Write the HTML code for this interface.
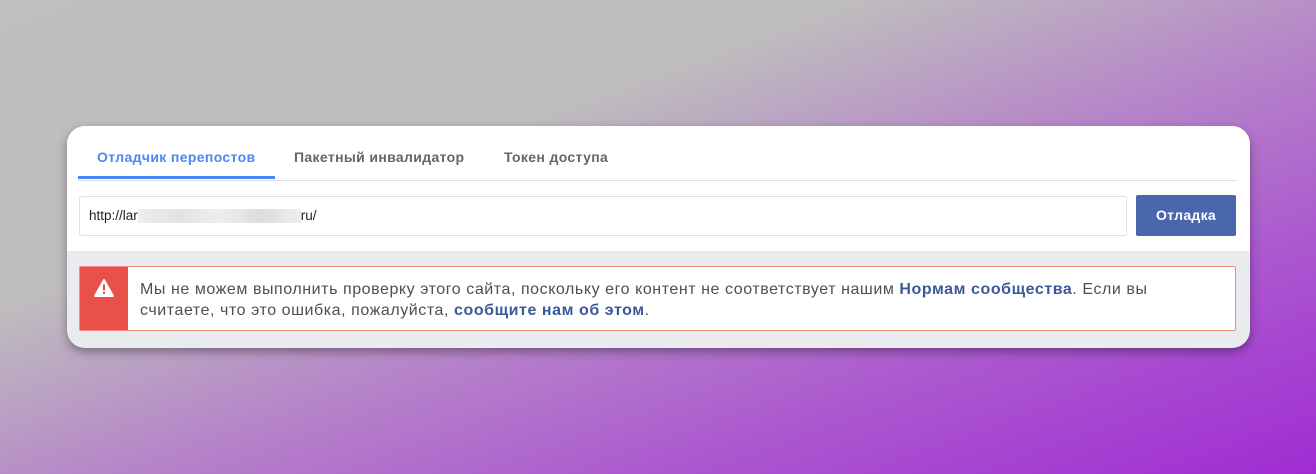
<!DOCTYPE html>
<html><head><meta charset="utf-8"><style>
*{box-sizing:border-box;margin:0;padding:0}
body{width:1316px;height:474px;overflow:hidden;font-family:"Liberation Sans","DejaVu Sans",sans-serif;
background:linear-gradient(to bottom right,#bfbfbf 0%,#bebcbe 33%,#b683c9 55%,#ab58cf 75%,#a02cd3 100%);position:relative}
.card{position:absolute;left:67px;top:126px;width:1183px;height:222px;border-radius:18px;background:#e9ebee;overflow:hidden;box-shadow:0 4px 10px rgba(0,0,0,.35)}
.top{position:absolute;left:0;top:0;width:100%;height:125px;background:#fff}
.tab{position:absolute;top:23px;font-size:14px;letter-spacing:0.35px;font-weight:bold;color:#606770}
.divider{position:absolute;left:11px;top:54px;width:1159px;height:1px;background:#dddfe2}
.ul{position:absolute;left:11px;top:50px;width:197px;height:3px;background:#4b86f5}
.input{position:absolute;left:12px;top:70px;width:1048px;height:40px;border:1px solid #dddfe2;border-radius:2px;font-size:13.5px;color:#1c1e21;padding:11px 9px}
.blur{display:inline-block;height:14px;vertical-align:middle;background:linear-gradient(90deg,#eee,#e2e2e2,#eee,#ddd,#eee)}
.btn{position:absolute;left:1069px;top:69px;width:100px;height:41px;background:#4a67ad;border-radius:2px;color:#fff;font-weight:bold;font-size:14px;letter-spacing:0.3px;text-align:center;line-height:41px}
.alert{position:absolute;left:12px;top:140px;width:1157px;height:65px;background:#fff;border:1px solid #f08a80;border-radius:2px}
.red{position:absolute;left:0;top:0;width:48px;height:63px;background:#e9504a}
.msg{position:absolute;left:60px;top:12px;font-size:16px;letter-spacing:0.56px;line-height:21px;color:#4b4f56;white-space:nowrap}
.msg b{color:#3b5998}
</style></head><body>
<div class="card">
<div class="top"></div>
<div class="tab" style="left:30px;color:#4b86f5">Отладчик перепостов</div>
<div class="tab" style="left:227px">Пакетный инвалидатор</div>
<div class="tab" style="left:437px">Токен доступа</div>
<div class="divider"></div><div class="ul"></div>
<div class="input">http://lar<span class="blur" style="width:163px"></span>ru/</div>
<div class="btn">Отладка</div>
<div class="alert"><div class="red"><svg width="48" height="63" viewBox="0 0 48 63"><path d="M24 13 L33 29 L15 29 Z" fill="#fff" stroke="#fff" stroke-width="2" stroke-linejoin="round"/><rect x="23" y="17.5" width="2" height="6" fill="#e9504a"/><rect x="23" y="25" width="2" height="2" fill="#e9504a"/></svg></div>
<div class="msg">Мы не можем выполнить проверку этого сайта, поскольку его контент не соответствует нашим <b>Нормам сообщества</b>. Если вы<br>считаете, что это ошибка, пожалуйста, <b>сообщите нам об этом</b>.</div></div>
</div>
</body></html>
